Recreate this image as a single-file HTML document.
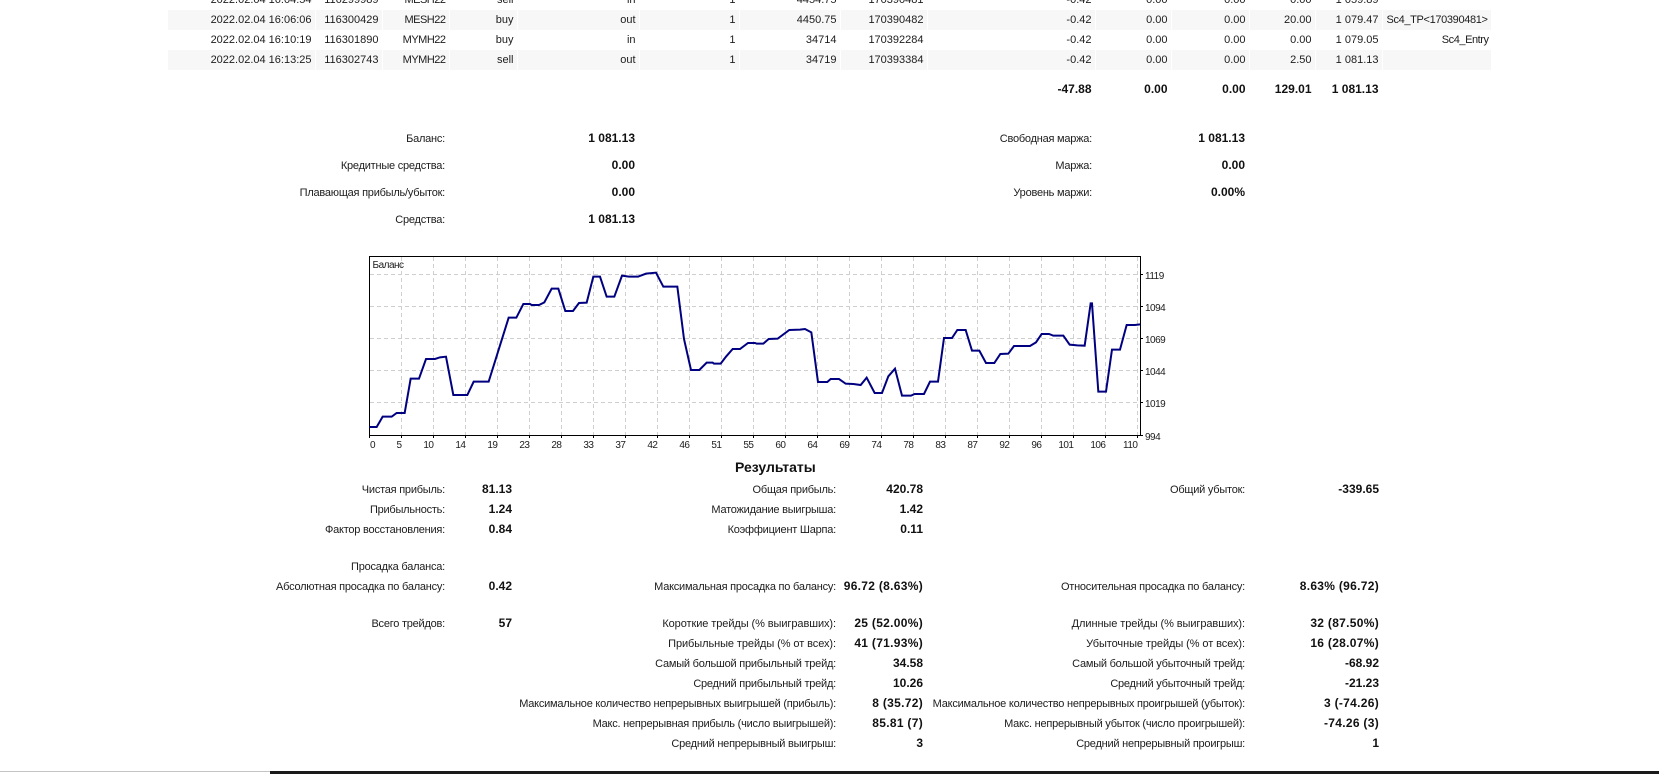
<!DOCTYPE html>
<html lang="ru">
<head>
<meta charset="utf-8">
<title>Отчет</title>
<style>
html,body{margin:0;padding:0;background:#fff}
body{width:1659px;height:774px;overflow:hidden;position:relative;font-family:"Liberation Sans","DejaVu Sans",sans-serif;font-size:11px;color:#1c1c1c}
#wrap{position:absolute;left:0;top:0;width:1659px;height:774px;overflow:hidden;filter:blur(.25px)}
table.d{position:absolute;left:168px;top:-10px;width:1323px;table-layout:fixed;border-collapse:collapse;font-size:11px}
table.d td{height:20px;padding:1px 3px 0 0;text-align:right;border-right:1px solid #fff;white-space:nowrap;overflow:visible;box-sizing:border-box;line-height:19px}
table.d tr.g td{background:#f7f7f7}
table.d tr.s td{height:9px;line-height:8px}
table.d tr.t td{font-weight:bold;font-size:12px;color:#111}
table.d td.c{text-align:left;padding-left:4px;letter-spacing:-.35px}
table.d td.e{letter-spacing:-.45px;padding-right:2px}
table.d td.y{letter-spacing:-.5px}
.a{position:absolute;white-space:nowrap;line-height:14px;height:14px;text-align:right;letter-spacing:-.23px;margin-top:1px}
.w{letter-spacing:-.08px}
.b{position:absolute;white-space:nowrap;line-height:14px;height:14px;text-align:right;font-weight:bold;font-size:12px;color:#111}
.p{letter-spacing:.3px}
.h{position:absolute;left:735px;top:459px;font-size:14px;font-weight:bold;line-height:16px;white-space:nowrap;color:#111}
svg{position:absolute;left:0;top:0}
svg text{font-family:"Liberation Sans","DejaVu Sans",sans-serif;font-size:10px;letter-spacing:-.5px;fill:#1c1c1c}
.bar1{position:absolute;left:0;top:771px;width:270px;height:1px;background:#c4c4c4}
.bar2{position:absolute;left:270px;top:771px;width:1389px;height:3px;background:#1a1a1a}
</style>
</head>
<body>
<div id="wrap">
<table class="d">
<colgroup><col style="width:147px"><col style="width:67px"><col style="width:67px"><col style="width:68px"><col style="width:122px"><col style="width:100px"><col style="width:101px"><col style="width:87px"><col style="width:168px"><col style="width:76px"><col style="width:78px"><col style="width:66px"><col style="width:67px"><col style="width:109px"></colgroup>
<tr><td>2022.02.04 16:04:54</td><td>116299989</td><td class="y">MESH22</td><td>sell</td><td>in</td><td>1</td><td>4454.75</td><td>170390481</td><td>-0.42</td><td>0.00</td><td>0.00</td><td>0.00</td><td>1 059.89</td><td></td></tr>
<tr class="g"><td>2022.02.04 16:06:06</td><td>116300429</td><td class="y">MESH22</td><td>buy</td><td>out</td><td>1</td><td>4450.75</td><td>170390482</td><td>-0.42</td><td>0.00</td><td>0.00</td><td>20.00</td><td>1 079.47</td><td class="c">Sc4_TP&lt;170390481&gt;</td></tr>
<tr><td>2022.02.04 16:10:19</td><td>116301890</td><td class="y">MYMH22</td><td>buy</td><td>in</td><td>1</td><td>34714</td><td>170392284</td><td>-0.42</td><td>0.00</td><td>0.00</td><td>0.00</td><td>1 079.05</td><td class="e">Sc4_Entry</td></tr>
<tr class="g"><td>2022.02.04 16:13:25</td><td>116302743</td><td class="y">MYMH22</td><td>sell</td><td>out</td><td>1</td><td>34719</td><td>170393384</td><td>-0.42</td><td>0.00</td><td>0.00</td><td>2.50</td><td>1 081.13</td><td></td></tr>
<tr class="s"><td colspan="14"></td></tr>
<tr class="t"><td colspan="8"></td><td>-47.88</td><td>0.00</td><td>0.00</td><td>129.01</td><td>1 081.13</td><td></td></tr>
</table>

<div class="a" style="right:1214px;top:131px">Баланс:</div><div class="b" style="right:1024px;top:131px">1 081.13</div>
<div class="a" style="right:1214px;top:158px">Кредитные средства:</div><div class="b" style="right:1024px;top:158px">0.00</div>
<div class="a" style="right:1214px;top:185px">Плавающая прибыль/убыток:</div><div class="b" style="right:1024px;top:185px">0.00</div>
<div class="a" style="right:1214px;top:212px">Средства:</div><div class="b" style="right:1024px;top:212px">1 081.13</div>
<div class="a" style="right:567px;top:131px">Свободная маржа:</div><div class="b" style="right:414px;top:131px">1 081.13</div>
<div class="a" style="right:567px;top:158px">Маржа:</div><div class="b" style="right:414px;top:158px">0.00</div>
<div class="a" style="right:567px;top:185px">Уровень маржи:</div><div class="b" style="right:414px;top:185px">0.00%</div>

<svg width="1659" height="774" viewBox="0 0 1659 774">
<g stroke="#cfcfcf" stroke-width="1" stroke-dasharray="4 3" fill="none">
<path d="M401.5 257V435M433.5 257V435M465.5 257V435M497.5 257V435M529.5 257V435M561.5 257V435M593.5 257V435M625.5 257V435M657.5 257V435M689.5 257V435M721.5 257V435M753.5 257V435M785.5 257V435M817.5 257V435M849.5 257V435M881.5 257V435M913.5 257V435M945.5 257V435M977.5 257V435M1009.5 257V435M1041.5 257V435M1073.5 257V435M1105.5 257V435M1137.5 257V435"/>
<path d="M370 274.5H1141M370 306.5H1141M370 338.5H1141M370 370.5H1141M370 402.5H1141"/>
</g>
<rect x="369.5" y="256.5" width="771" height="179" fill="none" stroke="#000" stroke-width="1"/>
<path d="M369.5 436v2M401.5 436v2M433.5 436v2M465.5 436v2M497.5 436v2M529.5 436v2M561.5 436v2M593.5 436v2M625.5 436v2M657.5 436v2M689.5 436v2M721.5 436v2M753.5 436v2M785.5 436v2M817.5 436v2M849.5 436v2M881.5 436v2M913.5 436v2M945.5 436v2M977.5 436v2M1009.5 436v2M1041.5 436v2M1073.5 436v2M1105.5 436v2M1137.5 436v2M1141 274.5h2M1141 306.5h2M1141 338.5h2M1141 370.5h2M1141 402.5h2M1141 435.5h2" stroke="#000" stroke-width="1" fill="none"/>
<g transform="translate(340 235) scale(.33333)">
<polyline fill="none" stroke="#000080" stroke-width="6" stroke-linejoin="miter" points="88,576 110,576 128,545 155,545 170,534 194,534 212,431 237,431 258,372 285,372 300,367 318,365 340,480 382,480 401,440 446,440 506,248 529,248 550,207 570,207 575,210 597,210 613,202 635,161 655,161 676,228 699,228 717,204 740,203 760,125 780,125 800,185 823,185 846,122 866,125 894,125 918,116 948,113 970,155 1012,155 1032,312 1053,405 1078,405 1100,383 1118,383 1122,386 1142,386 1158,365 1178,342 1200,342 1224,324 1245,324 1250,326 1270,326 1286,312 1313,311 1348,285 1380,284 1395,282 1414,292 1434,441 1462,441 1472,432 1497,432 1517,446 1540,447 1562,450 1580,428 1604,474 1626,474 1645,424 1665,401 1686,482 1713,482 1724,477 1752,477 1770,440 1794,440 1812,309 1836,309 1852,285 1877,285 1896,347 1918,347 1938,384 1963,384 1981,357 2005,356 2022,333 2070,333 2088,322 2105,297 2127,297 2140,302 2170,302 2189,329 2212,331 2234,332 2252,205 2256,205 2275,470 2298,470 2316,344 2340,344 2360,270 2385,270 2400,268"/>
</g>
<text x="372.5" y="268">Баланс</text>
<g>
<text x="1145" y="279">1119</text>
<text x="1145" y="311">1094</text>
<text x="1145" y="343">1069</text>
<text x="1145" y="375">1044</text>
<text x="1145" y="407">1019</text>
<text x="1145" y="440">994</text>
</g>
<g text-anchor="end">
<text x="375" y="448">0</text>
<text x="401.5" y="448">5</text>
<text x="433.5" y="448">10</text>
<text x="465.5" y="448">14</text>
<text x="497.5" y="448">19</text>
<text x="529.5" y="448">23</text>
<text x="561.5" y="448">28</text>
<text x="593.5" y="448">33</text>
<text x="625.5" y="448">37</text>
<text x="657.5" y="448">42</text>
<text x="689.5" y="448">46</text>
<text x="721.5" y="448">51</text>
<text x="753.5" y="448">55</text>
<text x="785.5" y="448">60</text>
<text x="817.5" y="448">64</text>
<text x="849.5" y="448">69</text>
<text x="881.5" y="448">74</text>
<text x="913.5" y="448">78</text>
<text x="945.5" y="448">83</text>
<text x="977.5" y="448">87</text>
<text x="1009.5" y="448">92</text>
<text x="1041.5" y="448">96</text>
<text x="1073.5" y="448">101</text>
<text x="1105.5" y="448">106</text>
<text x="1137.5" y="448">110</text>
</g>
</svg>

<div class="h">Результаты</div>

<div class="a" style="right:1214px;top:482px">Чистая прибыль:</div><div class="b" style="right:1147px;top:482px">81.13</div>
<div class="a" style="right:823px;top:482px">Общая прибыль:</div><div class="b" style="right:736px;top:482px">420.78</div>
<div class="a" style="right:414px;top:482px">Общий убыток:</div><div class="b" style="right:280px;top:482px">-339.65</div>

<div class="a" style="right:1214px;top:502px">Прибыльность:</div><div class="b" style="right:1147px;top:502px">1.24</div>
<div class="a" style="right:823px;top:502px">Матожидание выигрыша:</div><div class="b" style="right:736px;top:502px">1.42</div>

<div class="a" style="right:1214px;top:522px">Фактор восстановления:</div><div class="b" style="right:1147px;top:522px">0.84</div>
<div class="a" style="right:823px;top:522px">Коэффициент Шарпа:</div><div class="b" style="right:736px;top:522px">0.11</div>

<div class="a" style="right:1214px;top:559px">Просадка баланса:</div>

<div class="a" style="right:1214px;top:579px">Абсолютная просадка по балансу:</div><div class="b" style="right:1147px;top:579px">0.42</div>
<div class="a" style="right:823px;top:579px">Максимальная просадка по балансу:</div><div class="b p" style="right:736px;top:579px">96.72 (8.63%)</div>
<div class="a" style="right:414px;top:579px">Относительная просадка по балансу:</div><div class="b p" style="right:280px;top:579px">8.63% (96.72)</div>

<div class="a" style="right:1214px;top:616px">Всего трейдов:</div><div class="b" style="right:1147px;top:616px">57</div>
<div class="a w" style="right:823px;top:616px">Короткие трейды (% выигравших):</div><div class="b p" style="right:736px;top:616px">25 (52.00%)</div>
<div class="a w" style="right:414px;top:616px">Длинные трейды (% выигравших):</div><div class="b p" style="right:280px;top:616px">32 (87.50%)</div>

<div class="a w" style="right:823px;top:636px">Прибыльные трейды (% от всех):</div><div class="b p" style="right:736px;top:636px">41 (71.93%)</div>
<div class="a w" style="right:414px;top:636px">Убыточные трейды (% от всех):</div><div class="b p" style="right:280px;top:636px">16 (28.07%)</div>

<div class="a" style="right:823px;top:656px">Самый большой прибыльный трейд:</div><div class="b" style="right:736px;top:656px">34.58</div>
<div class="a" style="right:414px;top:656px">Самый большой убыточный трейд:</div><div class="b" style="right:280px;top:656px">-68.92</div>

<div class="a" style="right:823px;top:676px">Средний прибыльный трейд:</div><div class="b" style="right:736px;top:676px">10.26</div>
<div class="a" style="right:414px;top:676px">Средний убыточный трейд:</div><div class="b" style="right:280px;top:676px">-21.23</div>

<div class="a" style="right:823px;top:696px">Максимальное количество непрерывных выигрышей (прибыль):</div><div class="b p" style="right:736px;top:696px">8 (35.72)</div>
<div class="a" style="right:414px;top:696px">Максимальное количество непрерывных проигрышей (убыток):</div><div class="b p" style="right:280px;top:696px">3 (-74.26)</div>

<div class="a" style="right:823px;top:716px">Макс. непрерывная прибыль (число выигрышей):</div><div class="b p" style="right:736px;top:716px">85.81 (7)</div>
<div class="a" style="right:414px;top:716px">Макс. непрерывный убыток (число проигрышей):</div><div class="b p" style="right:280px;top:716px">-74.26 (3)</div>

<div class="a" style="right:823px;top:736px">Средний непрерывный выигрыш:</div><div class="b" style="right:736px;top:736px">3</div>
<div class="a" style="right:414px;top:736px">Средний непрерывный проигрыш:</div><div class="b" style="right:280px;top:736px">1</div>
</div>
<div class="bar1"></div>
<div class="bar2"></div>
</body>
</html>
